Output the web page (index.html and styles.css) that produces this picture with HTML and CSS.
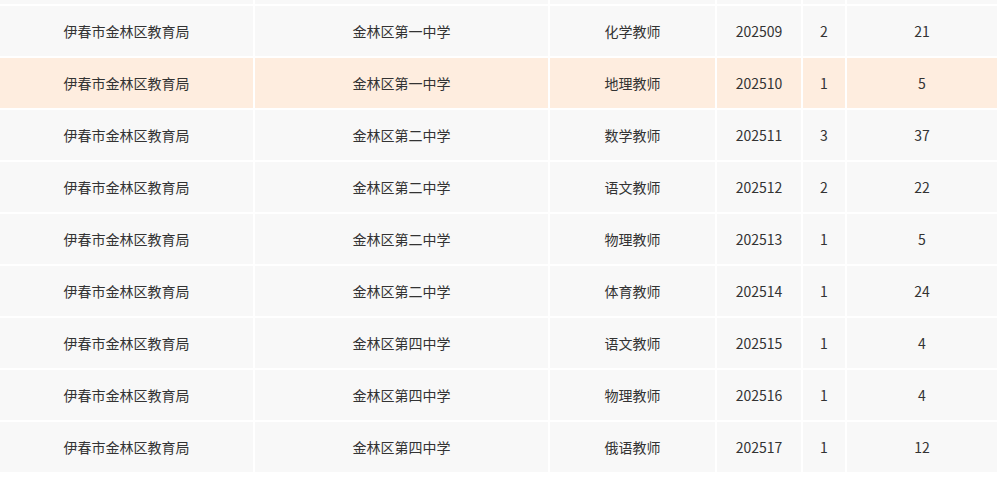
FILE: index.html
```html
<!DOCTYPE html>
<html lang="zh-CN">
<head>
<meta charset="utf-8">
<link rel="stylesheet" href="styles.css">
</head>
<body>
<div class="table">
  <div class="row"><div></div><div></div><div></div><div></div><div></div><div></div></div>
  <div class="row"><div>伊春市金林区教育局</div><div>金林区第一中学</div><div>化学教师</div><div>202509</div><div>2</div><div>21</div></div>
  <div class="row hl"><div>伊春市金林区教育局</div><div>金林区第一中学</div><div>地理教师</div><div>202510</div><div>1</div><div>5</div></div>
  <div class="row"><div>伊春市金林区教育局</div><div>金林区第二中学</div><div>数学教师</div><div>202511</div><div>3</div><div>37</div></div>
  <div class="row"><div>伊春市金林区教育局</div><div>金林区第二中学</div><div>语文教师</div><div>202512</div><div>2</div><div>22</div></div>
  <div class="row"><div>伊春市金林区教育局</div><div>金林区第二中学</div><div>物理教师</div><div>202513</div><div>1</div><div>5</div></div>
  <div class="row"><div>伊春市金林区教育局</div><div>金林区第二中学</div><div>体育教师</div><div>202514</div><div>1</div><div>24</div></div>
  <div class="row"><div>伊春市金林区教育局</div><div>金林区第四中学</div><div>语文教师</div><div>202515</div><div>1</div><div>4</div></div>
  <div class="row"><div>伊春市金林区教育局</div><div>金林区第四中学</div><div>物理教师</div><div>202516</div><div>1</div><div>4</div></div>
  <div class="row"><div>伊春市金林区教育局</div><div>金林区第四中学</div><div>俄语教师</div><div>202517</div><div>1</div><div>12</div></div>
</div>
</body>
</html>
```
FILE: styles.css
```css
html, body {
  margin: 0;
  padding: 0;
  background: #ffffff;
  overflow: hidden;
}
body {
  font-family: "Noto Sans CJK SC", "Noto Sans", sans-serif;
  font-size: 14px;
  color: #333333;
}
.table {
  display: flex;
  flex-direction: column;
  gap: 2px;
  margin-top: -46px;
  width: 997px;
}
.row {
  display: grid;
  grid-template-columns: 253px 293px 165px 84px 42px 1fr;
  gap: 2px;
  height: 50px;
}
.row > div {
  background: #f8f8f8;
  display: flex;
  align-items: center;
  justify-content: center;
}
.row.hl > div {
  background: #feeddf;
}
```
